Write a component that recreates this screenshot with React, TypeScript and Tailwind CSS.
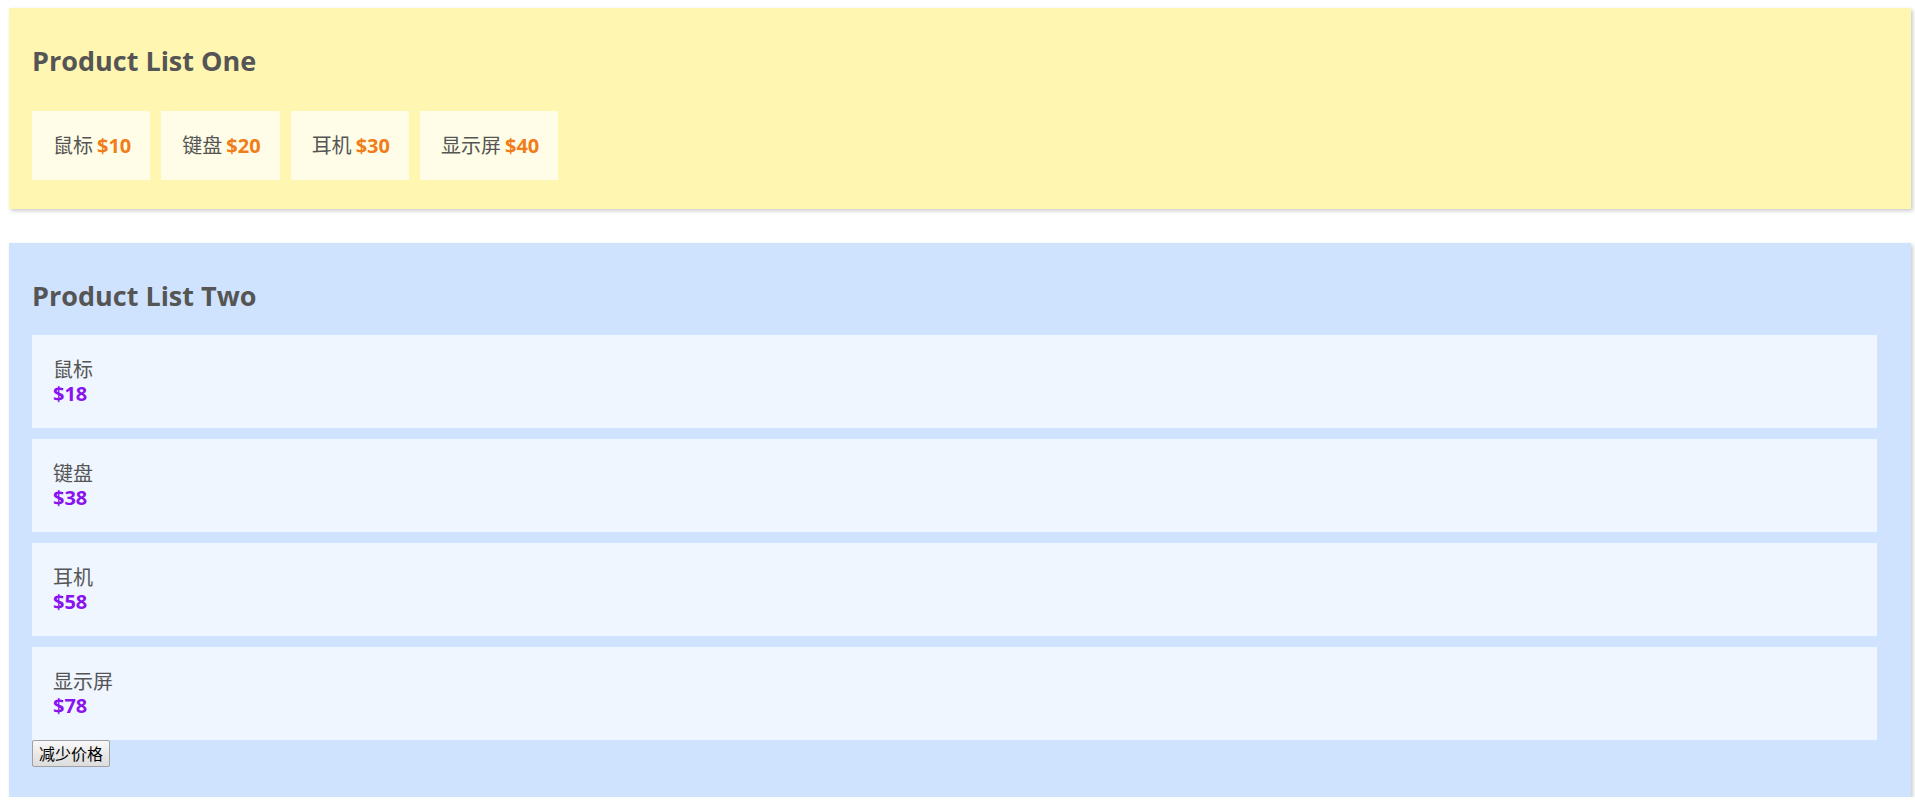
const listOne = [
  { name: '鼠标', price: 10 },
  { name: '键盘', price: 20 },
  { name: '耳机', price: 30 },
  { name: '显示屏', price: 40 },
]

const listTwo = [
  { name: '鼠标', price: 18 },
  { name: '键盘', price: 38 },
  { name: '耳机', price: 58 },
  { name: '显示屏', price: 78 },
]

const font = { fontFamily: '"Open Sans", "Noto Sans CJK SC", sans-serif' }

export default function App() {
  return (
    <div className="bg-white pt-2 pl-[9px] pr-1 text-[#555]" style={font}>
      {/* Product List One */}
      <div className="bg-[#fff7b1] px-[23px] pt-[34px] pb-[29px] shadow-[2px_2px_4px_rgba(0,0,0,0.2)]">
        <h2 className="text-[27px] font-bold leading-[37px] text-[#555]">Product List One</h2>
        <div className="mt-[32px] flex gap-[11px]">
          {listOne.map((p) => (
            <div key={p.name} className="flex h-[69px] items-center whitespace-nowrap bg-[#fffde7] pl-[21px] pr-[19px] text-[20px]">
              <span>{p.name}</span>
              <span className="ml-[4px] font-bold text-[#f07d1a]">${p.price}</span>
            </div>
          ))}
        </div>
      </div>

      {/* Product List Two */}
      <div className="mt-[34px] bg-[#d0e3fe] pl-[23px] pr-[34px] pt-[34px] pb-[30px] shadow-[2px_2px_4px_rgba(0,0,0,0.2)]">
        <h2 className="text-[27px] font-bold leading-[37px] text-[#555]">Product List Two</h2>
        <div className="mt-[21px] flex flex-col gap-[11px]">
          {listTwo.map((p) => (
            <div key={p.name} className="flex h-[93px] flex-col justify-center bg-[#eff6ff] px-[21px] text-[20px] leading-[24px]">
              <span>{p.name}</span>
              <span className="font-bold text-[#8a12f0]">${p.price}</span>
            </div>
          ))}
        </div>
        <button className="block h-[27px] w-[78px] rounded-[2px] border border-[#a0a0a0] bg-gradient-to-b from-[#f8f8f8] to-[#dcdcdc] text-[16px] leading-none text-black">
          减少价格
        </button>
      </div>
    </div>
  )
}
